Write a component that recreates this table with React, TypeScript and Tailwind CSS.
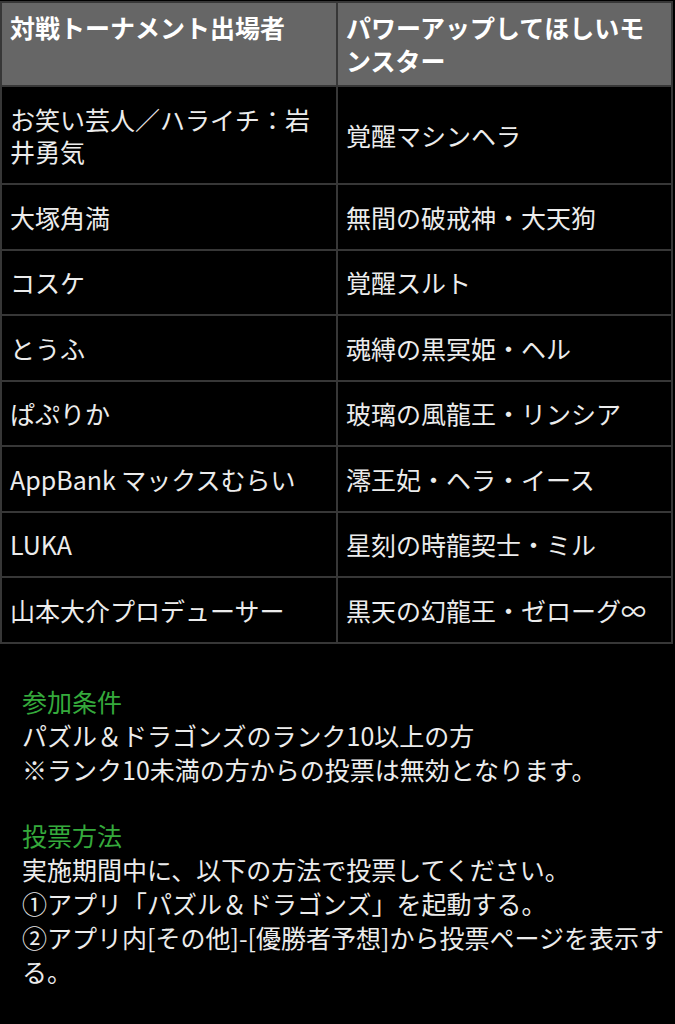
import React from "react";

const rows: [string, string][] = [
  ["お笑い芸人／ハライチ：岩井勇気", "覚醒マシンヘラ"],
  ["大塚角満", "無間の破戒神・大天狗"],
  ["コスケ", "覚醒スルト"],
  ["とうふ", "魂縛の黒冥姫・ヘル"],
  ["ぱぷりか", "玻璃の風龍王・リンシア"],
  ["AppBank マックスむらい", "澪王妃・ヘラ・イース"],
  ["LUKA", "星刻の時龍契士・ミル"],
  ["山本大介プロデューサー", "黒天の幻龍王・ゼローグ∞"],
];

export default function App() {
  return (
    <div
      className="min-h-[1024px] w-[675px] bg-black text-[#ececec]"
      style={{ fontFamily: '"Noto Sans CJK JP", "Noto Sans", sans-serif' }}
    >
      <div className="pt-[1px]">
        <table className="w-[673px] table-fixed border-collapse text-[25px] leading-[33px]">
          <colgroup>
            <col className="w-[336px]" />
            <col />
          </colgroup>
          <thead>
            <tr className="bg-[#666666]">
              <th className="border-2 border-[#373737] px-[8px] pt-[8px] pb-[8px] text-left align-top font-bold text-white">
                対戦トーナメント出場者
              </th>
              <th className="border-2 border-[#373737] px-[8px] pt-[8px] pb-[8px] text-left align-top font-bold text-white">
                パワーアップしてほしいモンスター
              </th>
            </tr>
          </thead>
          <tbody>
            {rows.map(([a, b]) => (
              <tr key={a}>
                <td className="border-2 border-[#373737] px-[8px] py-[15.5px] align-middle leading-[32.5px] break-all">{a}</td>
                <td className="border-2 border-[#373737] px-[8px] py-[15.5px] align-middle leading-[32.5px] break-all">{b}</td>
              </tr>
            ))}
          </tbody>
        </table>
      </div>
      <div className="mt-[40px] pl-[22px] pr-[2px] text-[25px] leading-[34px] break-all">
        <p className="text-[#35aa3c]">参加条件</p>
        <p>パズル＆ドラゴンズのランク10以上の方</p>
        <p>※ランク10未満の方からの投票は無効となります。</p>
        <p className="h-[32px]"></p>
        <p className="text-[#35aa3c]">投票方法</p>
        <p>実施期間中に、以下の方法で投票してください。</p>
        <p>①アプリ「パズル＆ドラゴンズ」を起動する。</p>
        <p>②アプリ内[その他]-[優勝者予想]から投票ページを表示する。</p>
      </div>
    </div>
  );
}
